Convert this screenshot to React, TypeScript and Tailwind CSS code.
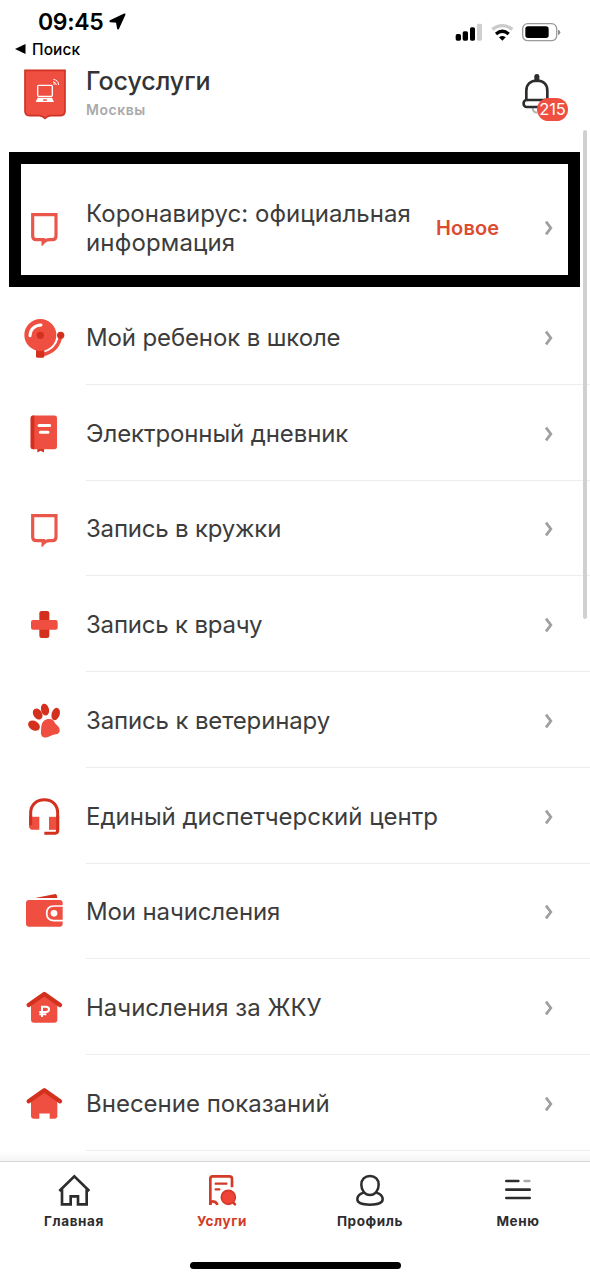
import type { ReactNode } from "react";

const RED = "#ee4f41";
const DARK = "#d4301e";

function RowIcon({ top, children }: { top: number; children: ReactNode }) {
  return (
    <svg className="size-12 shrink-0" viewBox={`30 ${top} 144 144`} fill="none">
      {children}
    </svg>
  );
}

const frame = (
  <RowIcon top={15}>
    <path
      d="M68 47H138V111Q138 122 127 122H119Q107 122 100 130V122H79Q68 122 68 111Z"
      stroke="#e9574b"
      strokeWidth="9.5"
    />
    <path d="M95 120H113L95 140Z" fill="#e9574b" />
  </RowIcon>
);

const bell = (
  <RowIcon top={27}>
    <path d="M151 99C145 124 127 143 97 149" stroke={RED} strokeWidth="10" />
    <rect x="78" y="132" width="25" height="26" rx="4" fill={DARK} />
    <circle cx="91" cy="90" r="48" fill={RED} />
    <circle cx="91" cy="91" r="11" fill={DARK} />
    <path d="M60 92C60 74 74 60 93 60" stroke="#fff" strokeWidth="9" strokeLinecap="round" />
    <circle cx="152" cy="91" r="11" fill={DARK} />
  </RowIcon>
);

const book = (
  <RowIcon top={313.5}>
    <path d="M82 428H102V441L92 436L82 441Z" fill={DARK} />
    <rect x="62" y="330" width="79" height="101" rx="8" fill={RED} />
    <path d="M73 330H70Q62 330 62 338V423Q62 431 70 431H73Z" fill={DARK} />
    <path d="M87 360H119M91 380H114" stroke="#fff" strokeWidth="9" strokeLinecap="round" />
  </RowIcon>
);

const cross = (
  <RowIcon top={303}>
    <rect x="88" y="333" width="30" height="81" rx="7" fill={DARK} />
    <rect x="63" y="360" width="80" height="29" rx="6" fill={RED} />
  </RowIcon>
);

const paw = (
  <RowIcon top={20}>
    <ellipse cx="72" cy="106" rx="19" ry="14" transform="rotate(32 72 106)" fill={DARK} />
    <ellipse cx="83" cy="71" rx="13" ry="18" transform="rotate(-32 83 71)" fill={DARK} />
    <ellipse cx="105" cy="58" rx="12" ry="18" transform="rotate(-14 105 58)" fill={DARK} />
    <ellipse cx="137" cy="71" rx="12" ry="19" transform="rotate(18 137 71)" fill={DARK} />
    <path
      d="M95 104C98 91 109 84 123 87C134 89 132 98 141 105C153 113 152 131 138 132C126 133 122 138 111 141C98 144 91 136 93 122C94 115 93 111 95 104Z"
      fill={RED}
    />
  </RowIcon>
);

const headset = (
  <RowIcon top={307.5}>
    <path d="M62 411V367C62 343 79 328 103 328C127 328 143 343 143 367V421Q143 428 136 428H103" stroke={DARK} strokeWidth="9" />
    <path d="M63 379H88V418H69Q58 418 58 407V379Z" fill={RED} />
    <path d="M117 379H142V418H117Z" fill={RED} />
    <path d="M62 376V404M143 376V422" stroke={DARK} strokeWidth="9" />
  </RowIcon>
);

const wallet = (
  <RowIcon top={24}>
    <path d="M75 54L136 42Q141 42 142 54Z" fill={DARK} />
    <rect x="48" y="60" width="110" height="80" rx="9" fill={RED} />
    <path d="M159 78H132Q110 78 110 100Q110 122 132 122H159" stroke="#fff" strokeWidth="5" />
    <circle cx="132" cy="100" r="10" fill="#fff" />
  </RowIcon>
);

const houseRuble = (
  <RowIcon top={312}>
    <path d="M63 370L103 343L142 370V419Q142 428 133 428H72Q63 428 63 419Z" fill={RED} />
    <path d="M56 375L103 342L150 375" stroke={DARK} strokeWidth="13" strokeLinejoin="round" strokeLinecap="round" />
    <path d="M96 411V380H108Q117 380 117 388Q117 396 108 396H88M88 403H109" stroke="#fff" strokeWidth="6" />
  </RowIcon>
);

const house = (
  <RowIcon top={13.5}>
    <path d="M63 73L103 46L142 73V121Q142 130 133 130H119V114H88V130H72Q63 130 63 121Z" fill={RED} />
    <path d="M56 77L103 44L150 77" stroke={DARK} strokeWidth="13" strokeLinejoin="round" strokeLinecap="round" />
  </RowIcon>
);

const rows: { label: string; icon: ReactNode; cls: string }[] = [
  { label: "Мой ребенок в школе", icon: bell, cls: "tracking-[-0.13px]" },
  { label: "Электронный дневник", icon: book, cls: "tracking-[-0.1px]" },
  { label: "Запись в кружки", icon: frame, cls: "tracking-[-0.2px]" },
  { label: "Запись к врачу", icon: cross, cls: "tracking-[-0.2px]" },
  { label: "Запись к ветеринару", icon: paw, cls: "tracking-[-0.15px]" },
  { label: "Единый диспетчерский центр", icon: headset, cls: "tracking-[0px]" },
  { label: "Мои начисления", icon: wallet, cls: "tracking-[-0.12px]" },
  { label: "Начисления за ЖКУ", icon: houseRuble, cls: "tracking-[0px]" },
  { label: "Внесение показаний", icon: house, cls: "tracking-[0px]" },
];

function Chevron() {
  return (
    <svg className="h-4 w-2.5 shrink-0" viewBox="0 0 10 16" fill="none">
      <path d="M2 1.6L6.8 8L2 14.4" stroke="#a0a0a0" strokeWidth="2.8" />
    </svg>
  );
}

function StatusBar() {
  return (
    <div className="flex h-[62px] shrink-0 justify-between text-black">
      <div className="flex flex-col">
        <div className="flex h-[38px] items-end gap-[5px] pl-[38px]">
          <span className="text-[23px] leading-[32px] font-semibold tracking-[-0.3px]">09:45</span>
          <svg className="mb-2 size-[17px]" viewBox="0 0 18 18">
            <path d="M16.5 1.5L1.5 8.7L8.3 9.3L9.6 16.5Z" fill="#000" stroke="#000" strokeWidth="2" strokeLinejoin="round" />
          </svg>
        </div>
        <div className="flex h-[22px] items-center gap-[6px] pl-[15px]">
          <svg className="h-2.5 w-[11px]" viewBox="0 0 11 10">
            <path d="M0 5L10.5 0V10Z" />
          </svg>
          <span className="pt-px text-[15.5px] leading-5 font-medium tracking-[0.1px]">Поиск</span>
        </div>
      </div>
      <svg className="h-[60px] w-40" viewBox="0 0 480 180" fill="none">
        <rect x="77" y="102" width="16" height="20" rx="5" fill="#000" />
        <rect x="98" y="94" width="16" height="28" rx="5" fill="#000" />
        <rect x="120" y="82" width="15" height="40" rx="5" fill="#000" />
        <rect x="141" y="71" width="15" height="51" rx="4" fill="#d0d0d0" />
        <path d="M187 88Q217 66 247 88" stroke="#cbcbcb" strokeWidth="10" />
        <path d="M198 102Q217 86 236 102" stroke="#000" strokeWidth="10" />
        <path d="M217 122L207 112Q217 104 227 112Z" fill="#000" />
        <rect x="278" y="71" width="102" height="51" rx="15" stroke="#9b9b9b" strokeWidth="4" />
        <rect x="286" y="79" width="70" height="35" rx="8" fill="#000" />
        <path d="M384 89Q391 91 391 97Q391 103 384 105Z" fill="#8d8d8d" />
      </svg>
    </div>
  );
}

function Header() {
  return (
    <header className="flex h-[90px] shrink-0 pl-[23px]">
      <svg className="mt-[6px] h-[54px] w-11" viewBox="69 204 132 162" fill="none">
        <path
          d="M75 211H195V333Q195 346 182 347H151Q142 348 135 355Q128 348 119 347H88Q75 346 75 333Z"
          fill={RED}
          stroke="#cf3324"
          strokeWidth="5"
        />
        <rect x="113" y="256" width="44" height="33" rx="3" stroke="#fff" strokeWidth="4" />
        <path d="M113 293H156L162 306H107Z" fill="#fff" />
        <path d="M128 302L131 298H139L142 302Z" fill={RED} />
        <path d="M160 238Q175 240 176 255M159 245Q168 247 169 255" stroke="#fff" strokeWidth="3" />
        <circle cx="162" cy="252" r="2.5" fill="#fff" />
      </svg>
      <div className="ml-[19px] flex flex-col">
        <h1 className="mt-[3px] text-[25px] leading-8 font-medium tracking-[-0.05px] text-[#333]">Госуслуги</h1>
        <p className="mt-[4px] text-[14px] leading-[18px] font-semibold tracking-[0.55px] text-[#a9a9a9]">Москвы</p>
      </div>
      <div className="relative mr-[20px] ml-auto h-14 w-12">
        <svg className="mt-[10px] h-[42px] w-8" viewBox="276 216 96 126" fill="none">
          <path d="M308 322Q308 338 321 338" stroke="#b5b5b5" strokeWidth="6" />
          <path d="M289 300V272C289 253 302 242 321 242C340 242 352 253 352 272V300" stroke="#2d2d2f" strokeWidth="8" />
          <rect x="313" y="222" width="15" height="25" rx="7" fill="#2d2d2f" />
          <rect x="281" y="300" width="79" height="21" rx="9" stroke="#2d2d2f" strokeWidth="8" />
        </svg>
        <span className="absolute top-[36px] left-[15px] flex h-[23px] w-[31px] items-center justify-center rounded-full bg-[#ee4f41] text-[16.5px] tracking-[-0.1px] text-white">
          215
        </span>
      </div>
    </header>
  );
}

const tabs: { label: string; active?: boolean; box: string; icon: ReactNode }[] = [
  {
    label: "Главная",
    box: "138 288 108 108",
    icon: <path d="M148 345L193 301L238 345M156 340V385H182V361H204V385H230V340" stroke="#2d2d2f" strokeWidth="8" />,
  },
  {
    label: "Услуги",
    active: true,
    box: "582 288 108 108",
    icon: (
      <>
        <path d="M601 387V308Q601 301 608 301H658Q666 301 666 308V334" stroke="#d33a28" strokeWidth="8" />
        <path d="M600 385Q604 374 612 377Q620 379 622 387" stroke="#d33a28" strokeWidth="8" />
        <path d="M617 323H649M617 340H628" stroke="#d33a28" strokeWidth="7" strokeLinecap="round" />
        <path d="M668 378L675 385" stroke="#d33a28" strokeWidth="8" strokeLinecap="round" />
        <circle cx="655" cy="364" r="21" fill="#f04438" stroke="#d33a28" strokeWidth="5" />
      </>
    ),
  },
  {
    label: "Профиль",
    box: "186 288 108 108",
    icon: (
      <>
        <path
          d="M240 300C256 300 266 311 266 326C266 343 255 357 240 357C225 357 214 343 214 326C214 311 224 300 240 300Z"
          stroke="#2d2d2f"
          strokeWidth="7.5"
        />
        <path d="M221 350C208 354 202 361 202 370C202 382 219 386 240 386C261 386 278 382 278 370C278 361 272 354 259 350" stroke="#2d2d2f" strokeWidth="7.5" />
      </>
    ),
  },
  {
    label: "Меню",
    box: "628 288 108 108",
    icon: (
      <>
        <path d="M647 315H683M647 341H717M647 366H717" stroke="#2d2d2f" strokeWidth="8" strokeLinecap="round" />
        <path d="M702 315H716" stroke="#aaa" strokeWidth="8" strokeLinecap="round" />
      </>
    ),
  },
];

export default function App() {
  return (
    <div className="relative flex h-[1280px] w-[590px] flex-col overflow-hidden bg-white font-['Inter','Noto_Sans',sans-serif] text-[#3c3c3c]">
      <StatusBar />
      <Header />
      <main className="flex h-[1009px] shrink-0 flex-col overflow-hidden">
        <div className="flex h-[137px] shrink-0">
          <div className="ml-[9px] flex h-[135px] w-[571px] items-center border-[12px] border-black pt-[17px]">
            <span className="-ml-px flex">{frame}</span>
            <p className="ml-[18px] w-[350px] pt-[2px] text-[24px] leading-[28.7px] tracking-[0.03px]">
              Коронавирус: официальная
              <br />
              <span className="tracking-[0.15px]">информация</span>
            </p>
            <span className="text-[20px] font-semibold tracking-[0.15px] text-[#dd4b30]">Новое</span>
            <span className="mr-[14px] ml-auto flex">
              <Chevron />
            </span>
          </div>
        </div>
        {rows.map((row) => (
          <div key={row.label} className="flex h-[95.75px] shrink-0 items-center pl-5">
            <span className="flex pt-[2px]">{row.icon}</span>
            <div className="ml-[18px] flex h-full flex-1 items-center justify-between border-b border-[#ededed] pt-[3px] pr-9">
              <span className={`text-[24px] whitespace-nowrap ${row.cls}`}>{row.label}</span>
              <Chevron />
            </div>
          </div>
        ))}
        <div className="flex-1 bg-linear-to-b from-white to-[#f5f5f5]" />
      </main>
      <nav className="flex h-[119px] shrink-0 flex-col border-t border-[#d6d6d6] bg-white">
        <div className="grid w-[592px] grid-cols-4">
          {tabs.map((tab) => (
            <div key={tab.label} className="flex flex-col items-center pt-[9.5px]">
              <svg className="size-9" viewBox={tab.box} fill="none">
                {tab.icon}
              </svg>
              <span
                className={`mt-[3px] text-[13.5px] leading-5 font-bold tracking-[0.6px] ${tab.active ? "text-[#d33a28]" : "text-[#2d2d2f]"}`}
              >
                {tab.label}
              </span>
            </div>
          ))}
        </div>
        <div className="mx-auto mt-[31px] h-[7px] w-[211px] rounded-full bg-black" />
      </nav>
      <div className="absolute top-[130px] left-[583px] h-[489px] w-[4px] rounded-full bg-[#d0d0d0]" />
    </div>
  );
}
